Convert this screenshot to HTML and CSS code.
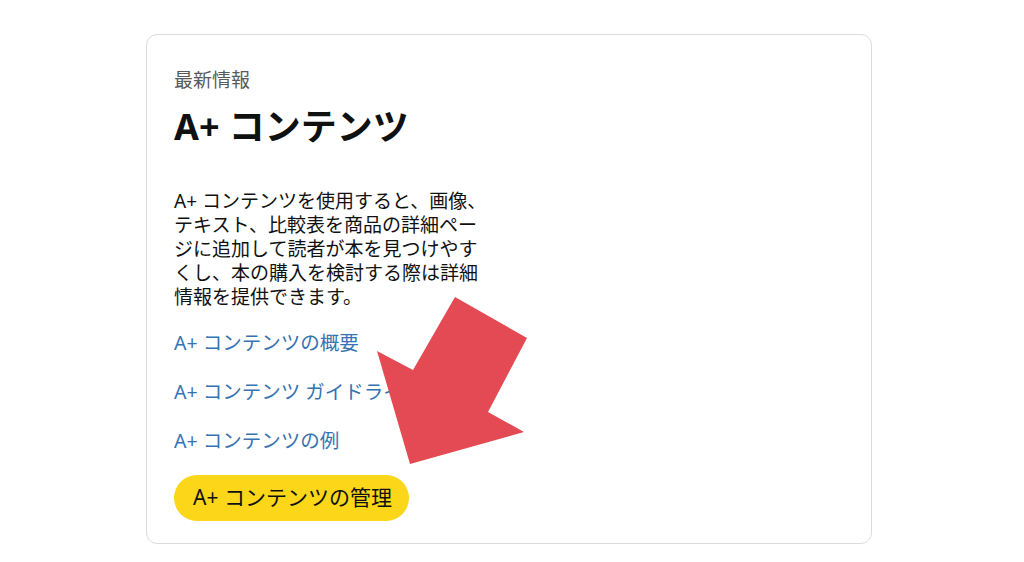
FILE: index.html
```html
<!DOCTYPE html>
<html lang="ja">
<head>
<meta charset="utf-8">
<title>A+ コンテンツ</title>
<link rel="stylesheet" href="styles.css">
</head>
<body>
<main class="page">
  <section class="card">
    <p class="eyebrow">最新情報</p>
    <h1 class="title">A+ コンテンツ</h1>
    <p class="desc">A+ コンテンツを使用すると、画像、テキスト、比較表を商品の詳細ページに追加して読者が本を見つけやすくし、本の購入を検討する際は詳細情報を提供できます。</p>
    <ul class="links">
      <li><a class="link" href="#">A+ コンテンツの概要</a></li>
      <li><a class="link" href="#">A+ コンテンツ ガイドライン</a></li>
      <li><a class="link" href="#">A+ コンテンツの例</a></li>
    </ul>
    <a class="btn" href="#">A+ コンテンツの管理</a>
  </section>
  <svg class="arrow" width="1024" height="562" viewBox="0 0 1024 562" aria-hidden="true">
    <polygon points="455,297 527,338 488,412 524,432 410,464 377,351 413,370" fill="#e34a53"/>
  </svg>
</main>
</body>
</html>
```

FILE: styles.css
```css
html, body {
  margin: 0;
  padding: 0;
  background: #ffffff;
}
body {
  font-family: "Noto Sans", "Noto Sans CJK JP", sans-serif;
  color: #111111;
}
.page {
  position: relative;
  width: 1024px;
  height: 562px;
  overflow: hidden;
  padding-top: 34px;
  box-sizing: border-box;
}
.card {
  margin-left: 146px;
  width: 726px;
  height: 510px;
  box-sizing: border-box;
  border: 1px solid #dcdcdc;
  border-radius: 11px;
  padding: 33px 27px 0;
}
.eyebrow {
  margin: 0;
  font-size: 19px;
  line-height: 24px;
  color: #5a5a5a;
}
.title {
  margin: 15px 0 0;
  font-size: 36px;
  line-height: 40px;
  font-weight: 700;
  color: #0f1111;
}
.desc {
  margin: 42px 0 0;
  width: 320px;
  font-size: 19px;
  line-height: 24px;
  color: #111111;
}
.links {
  list-style: none;
  margin: 22px 0 0;
  padding: 0;
  display: flex;
  flex-direction: column;
  gap: 24px;
}
.links li {
  line-height: 24px;
}
.link {
  font-size: 19.5px;
  color: #3773b3;
  text-decoration: none;
}
.btn {
  margin-top: 21px;
  display: inline-flex;
  align-items: center;
  box-sizing: border-box;
  height: 46px;
  padding: 0 17px 4px 19px;
  border-radius: 23px;
  background: #fcd619;
  color: #0f1111;
  font-size: 21px;
  text-decoration: none;
}
.arrow {
  position: absolute;
  left: 0;
  top: 0;
  pointer-events: none;
}
```
